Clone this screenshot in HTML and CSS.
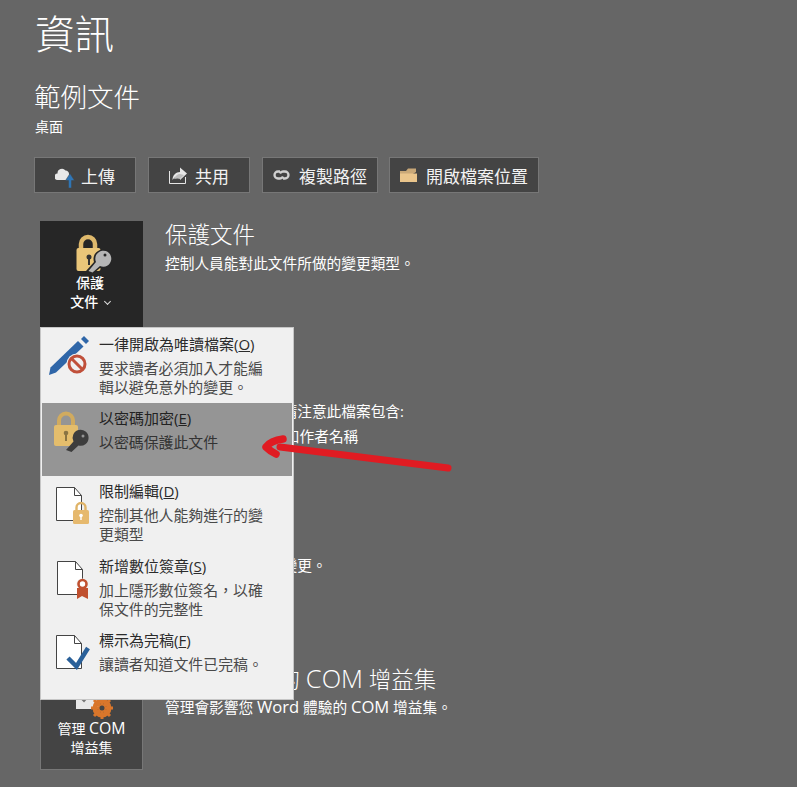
FILE: index.html
```html
<!DOCTYPE html>
<html lang="zh-Hant">
<head>
    <meta charset="UTF-8">
    <title>資訊</title>
    <link rel="stylesheet" href="styles.css">
</head>
<body>
<div class="page">
    <h1 class="page-title">資訊</h1>
    <div class="doc-name">範例文件</div>
    <div class="doc-path">桌面</div>

    <div class="actions">
        <div class="action action-upload">
            <svg width="21" height="26" viewBox="0 0 21 26"><path d="M3 18a3 3 0 0 1-.5-6.500 4.500 4.500 0 0 1 8-3 3.500 3.500 0 0 1 3.500 4 3 3 0 0 1-.5 5.500z" fill="#e8e8e8"/><path d="M13.500 26v-7.500h-3L15 11.500l4.500 7h-3V26z" fill="#2f75b5" stroke="#444" stroke-width=".5"/></svg>
            上傳
        </div>
        <div class="action action-share">
            <svg width="19" height="18" viewBox="0 0 19 18"><path d="M.5 5v12.500h16V11" fill="none" stroke="#e6e6e6" stroke-width="1"/><path d="M3.500 14c0-5 3.500-8 7.500-8V1.500L18 7.500l-7 6.500V10c-3 0-5.500 1-7.500 4z" fill="#e6e6e6"/><path d="M5 13c1-3 3.500-5 6-5l4 1-4 4c-2-1-4-.5-6 0z" fill="#bdbdbd"/></svg>
            共用
        </div>
        <div class="action action-path">
            <svg width="17" height="10" viewBox="0 0 17 10"><path d="M7 1.500H5a3.500 3.500 0 0 0 0 7h2a3.500 3.500 0 0 0 3-2M10 8.500h2a3.500 3.500 0 0 0 0-7h-2a3.500 3.500 0 0 0-3 2" fill="none" stroke="#d0d0d0" stroke-width="2.300"/></svg>
            複製路徑
        </div>
        <div class="action action-folder">
            <svg width="17" height="15" viewBox="0 0 17 15"><path d="M0 14V3h6l2-2.500h8V4z" fill="#c9a878"/><path d="M0 14V5.500h17V14z" fill="#eac58c"/></svg>
            開啟檔案位置
        </div>
    </div>

    <section class="info-row row-protect">
        <div class="tile tile-active">
            <svg class="lock-icon" width="40" height="42" viewBox="0 0 40 42">
                <path d="M9 18v-5a7 7 0 0 1 14 0v5" fill="none" stroke="#dfb96c" stroke-width="4.500"/>
                <rect x="4.500" y="17" width="24" height="23" rx="2" fill="#eac679"/>
                <circle cx="17" cy="26" r="2.500" fill="#333"/><rect x="16" y="27" width="2" height="7" fill="#333"/>
                <path d="M14 40l8-9a9.500 9.500 0 1 1 6 6l-7 6z" fill="#262626"/>
                <path d="M16.500 40l7.500-9a8 8 0 1 1 4 4l-7.500 6.500z" fill="#b5b5b5"/>
                <circle cx="33" cy="24" r="1.500" fill="#262626"/>
            </svg>
            <span class="tile-label">保護<br>文件 <i class="chev"></i></span>
        </div>
        <div class="info-text">
            <h2>保護文件</h2>
            <p>控制人員能對此文件所做的變更類型。</p>
        </div>
    </section>

    <section class="info-row row-inspect">
        <div class="tile"><span>檢查<br>文件</span></div>
        <div class="info-text">
            <h2>檢查文件</h2>
            <p>發佈此檔案之前，請注意此檔案包含:</p>
            <p class="bullet">文件屬性、範本和作者名稱</p>
        </div>
    </section>

    <section class="info-row row-versions">
        <div class="tile"><span>管理<br>文件</span></div>
        <div class="info-text">
            <h2>管理文件</h2>
            <p>沒有任何未儲存的變更。</p>
        </div>
    </section>

    <section class="info-row row-com">
        <div class="tile tile-com">
            <svg width="44" height="34" viewBox="0 0 44 34">
                <rect x="6" y="2" width="24" height="22" fill="#e8e8e8"/>
                <path d="M10 12l4 4 7-8" fill="none" stroke="#777" stroke-width="2"/>
                <circle cx="32" cy="23" r="7" fill="none" stroke="#d9762b" stroke-width="5"/>
                <path d="M32 12v22M21 23h22M24 15l16 16M40 15 24 31" stroke="#d9762b" stroke-width="3"/>
                <circle cx="32" cy="23" r="2.500" fill="#444"/>
            </svg>
            <span>管理 <span class="latin">COM</span><br>增益集</span>
        </div>
        <div class="info-text">
            <h2>慢速和停用的 <span class="latin">COM</span> 增益集</h2>
            <p>管理會影響您 <span class="latin">Word</span> 體驗的 <span class="latin">COM</span> 增益集。</p>
        </div>
    </section>

    <div class="menu">
        <div class="menu-item">
            <svg class="menu-icon" width="44" height="44" viewBox="0 0 44 44">
                <path d="M2 40l1.500-7.500L31 6l5.500 5.500L9 37.500z" fill="#2f66a8"/>
                <path d="M34 4l3-3 5 5-3 3z" fill="#2f66a8"/>
                <circle cx="30" cy="29" r="10.500" fill="#f0f0f0"/>
                <circle cx="30" cy="29" r="8" fill="#f0f0f0" stroke="#c0503a" stroke-width="3"/>
                <path d="M24.500 23.500l11 11" stroke="#c0503a" stroke-width="3"/>
            </svg>
            <div class="menu-text">
                <div class="menu-title">一律開啟為唯讀檔案(<u>O</u>)</div>
                <div class="menu-desc">要求讀者必須加入才能編<br>輯以避免意外的變更。</div>
            </div>
        </div>
        <div class="menu-item menu-item-hover">
            <svg class="menu-icon" width="44" height="44" viewBox="0 0 44 44">
                <path d="M12 18v-6.500a7 7 0 0 1 14 0V18" fill="none" stroke="#d1ab5f" stroke-width="4"/>
                <rect x="7" y="16" width="24" height="21" rx="2" fill="#e4bd6c"/>
                <circle cx="19" cy="24" r="2.300" fill="#8a7443"/><rect x="18" y="25" width="2" height="7" fill="#8a7443"/>
                <path d="M19 41l7.500-8.500a8 8 0 1 1 5 4L24.500 43z" fill="#3d3d3d"/>
                <circle cx="36" cy="27" r="1.500" fill="#959595"/>
            </svg>
            <div class="menu-text">
                <div class="menu-title">以密碼加密(<u>E</u>)</div>
                <div class="menu-desc">以密碼保護此文件</div>
            </div>
        </div>
        <div class="menu-item menu-item-tall">
            <svg class="menu-icon" width="44" height="44" viewBox="0 0 44 44">
                <path d="M9.500 5.500h18l7 8v25h-25z" fill="#fff" stroke="#444" stroke-width="1"/>
                <path d="M27.500 5.500v8h7" fill="none" stroke="#444" stroke-width="1"/>
                <path d="M29.500 29v-3.500a4.500 4.500 0 0 1 9 0V29" fill="none" stroke="#e0b468" stroke-width="2.400"/>
                <rect x="26" y="28" width="16" height="14" rx="1.500" fill="#e6b96e"/>
                <circle cx="34" cy="33.500" r="1.800" fill="#fff"/><rect x="33.300" y="33.500" width="1.400" height="4.500" fill="#fff"/>
            </svg>
            <div class="menu-text">
                <div class="menu-title">限制編輯(<u>D</u>)</div>
                <div class="menu-desc">控制其他人能夠進行的變<br>更類型</div>
            </div>
        </div>
        <div class="menu-item">
            <svg class="menu-icon" width="44" height="44" viewBox="0 0 44 44">
                <path d="M10.500 4.500h18l7 8v25h-25z" fill="#fff" stroke="#444" stroke-width="1"/>
                <path d="M28.500 4.500v8h7" fill="none" stroke="#444" stroke-width="1"/>
                <circle cx="35" cy="27" r="5.500" fill="#f0f0f0"/>
                <path d="M30 31v11l5-3 6 3V31z" fill="#c0502f"/>
                <circle cx="35.500" cy="27" r="4" fill="#fff" stroke="#c0502f" stroke-width="2.600"/>
            </svg>
            <div class="menu-text">
                <div class="menu-title">新增數位簽章(<u>S</u>)</div>
                <div class="menu-desc">加上隱形數位簽名，以確<br>保文件的完整性</div>
            </div>
        </div>
        <div class="menu-item">
            <svg class="menu-icon" width="44" height="44" viewBox="0 0 44 44">
                <path d="M9.500 4.500h18l7 8v25h-25z" fill="#fff" stroke="#444" stroke-width="1"/>
                <path d="M27.500 4.500v8h7" fill="none" stroke="#444" stroke-width="1"/>
                <path d="M21 27l8.500 8.500L41 17" fill="none" stroke="#2a6099" stroke-width="4.500"/>
            </svg>
            <div class="menu-text">
                <div class="menu-title">標示為完稿(<u>F</u>)</div>
                <div class="menu-desc">讓讀者知道文件已完稿。</div>
            </div>
        </div>
    </div>

    <svg class="arrow" width="200" height="40" viewBox="0 0 200 40">
        <path d="M188 36C140 30 90 24 20 15" fill="none" stroke="#e01b22" stroke-width="7" stroke-linecap="round"/>
        <path d="M23 7C14 8 9 11 6 15c3 3 6 5 10 7" fill="none" stroke="#e01b22" stroke-width="7.500" stroke-linecap="round" stroke-linejoin="round"/>
    </svg>
</div>
</body>
</html>
```

FILE: styles.css
```css
* {
    box-sizing: border-box;
}
html, body {
    margin: 0;
    height: 100%;
    background-color: #666;
}
body {
    font-family: "Open Sans", "Noto Sans CJK TC", sans-serif;
    color: #fff;
    overflow: hidden;
}
.page {
    position: relative;
    width: 797px;
    height: 787px;
    padding: 7px 0 0 34px;
}
.page-title {
    margin: 0 0 0 1px;
    font-size: 39.500px;
    font-weight: 300;
    line-height: 54px;
}
.doc-name {
    margin-top: 18px;
    font-size: 26.500px;
    font-weight: 300;
    line-height: 36px;
}
.doc-path {
    margin: 2px 0 0 1px;
    font-size: 14px;
    line-height: 20px;
}
.actions {
    display: flex;
    margin-top: 20px;
    height: 36px;
}
.action {
    display: flex;
    align-items: center;
    justify-content: center;
    background-color: #444;
    border: 1px solid #777;
    font-size: 17px;
    color: #f2f2f2;
}
.action-upload {
    width: 102px;
    gap: 5px;
}
.action-share {
    width: 102px;
    margin-left: 12px;
    gap: 7px;
}
.action-path {
    width: 116px;
    margin-left: 12px;
    gap: 9px;
}
.action-folder {
    width: 150px;
    margin-left: 11px;
    gap: 9px;
}
.info-row {
    display: flex;
    margin-left: 6px;
    gap: 22px;
    height: 105px;
}
.row-protect {
    margin-top: 28px;
}
.row-inspect {
    margin-top: 43px;
}
.row-versions {
    margin-top: 49px;
}
.row-com {
    margin-top: 37px;
}
.tile {
    display: flex;
    flex-direction: column;
    align-items: center;
    justify-content: flex-end;
    flex: none;
    width: 103px;
    height: 105px;
    padding-bottom: 14px;
    background-color: #444;
    border: 1px solid #777;
    font-size: 14px;
    line-height: 19px;
    text-align: center;
}
.tile-active {
    height: 106px;
    padding-bottom: 15px;
    background-color: #262626;
    border-color: #262626;
    font-weight: 500;
}
.tile-label {
    margin-right: 3px;
}
.tile-com {
    padding-bottom: 12px;
}
.latin {
    font-size: 1.130em;
    line-height: 1;
}
.chev {
    display: inline-block;
    width: 5px;
    height: 5px;
    margin: 0 0 3px 3px;
    border-right: 1px solid #ddd;
    border-bottom: 1px solid #ddd;
    transform: rotate(45deg);
}
.info-text h2 {
    margin: 0;
    font-size: 22.500px;
    font-weight: 300;
    line-height: 27px;
}
.info-text p {
    margin: 5px 0 0;
    padding-top: 1px;
    font-size: 14.700px;
    line-height: 19px;
}
.info-text .bullet {
    padding-left: 17px;
}
.row-com h2 {
    padding-top: 1px;
}
.row-com p {
    margin-top: 4px;
}
.menu {
    position: absolute;
    left: 40px;
    top: 327px;
    width: 254px;
    height: 373px;
    padding: 1px 2px;
    background-color: #f0f0f0;
    border: 1px solid #c6c6c6;
}
.menu-item {
    display: flex;
    height: 74px;
    padding-left: 4px;
    color: #4a4a4a;
}
.menu-item-tall {
    height: 75px;
}
.menu-icon {
    flex: none;
    margin-top: 6px;
}
.menu-text {
    padding: 5px 0 0 8px;
}
.menu-title {
    font-size: 15px;
    line-height: 20px;
    color: #2b2b2b;
}
.menu-desc {
    margin-top: 5px;
    font-size: 14.900px;
    line-height: 19px;
}
.menu-item-hover {
    height: 73px;
    margin-left: -1px;
    margin-right: -1px;
    padding-left: 5px;
    background-color: #959595;
    color: #333;
}
.menu-item-hover .menu-title {
    color: #222;
}
.arrow {
    position: absolute;
    left: 260px;
    top: 432px;
}
```
